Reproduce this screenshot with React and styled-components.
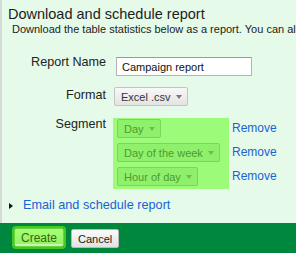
import React from "react";
import styled, { createGlobalStyle } from "styled-components";

const GlobalStyle = createGlobalStyle`
  html, body {
    margin: 0;
    padding: 0;
    width: 296px;
    height: 253px;
    overflow: hidden;
    background: #e5fae9;
  }
  body {
    font-family: "Liberation Sans", Arial, sans-serif;
    color: #222;
  }
`;

const Page = styled.div`
  width: 296px;
  height: 253px;
  display: flex;
  flex-direction: column;
  overflow: hidden;
`;

const Panel = styled.div`
  flex: 1;
  background: #e5fae9;
  border-left: 2px solid #d3dbd6;
  padding: 6px 0 10px 6px;
  display: flex;
  flex-direction: column;
`;

const Title = styled.h2`
  margin: 0;
  font-size: 14.5px;
  font-weight: normal;
  line-height: 17px;
  color: #1d1d1d;
  white-space: nowrap;
`;

const Intro = styled.p`
  margin: 0;
  padding-left: 4px;
  font-size: 11px;
  line-height: 13px;
  white-space: nowrap;
  overflow: hidden;
`;

const Form = styled.div`
  margin: 19px 0 0 -6px;
  display: grid;
  grid-template-columns: 104px auto;
  column-gap: 8px;
  row-gap: 11px;
  align-items: start;
`;

const Label = styled.div`
  text-align: right;
  font-size: 12.6px;
  line-height: 15px;
  margin-top: ${(p) => p.$offset || 0}px;
`;

const TextInput = styled.input`
  box-sizing: border-box;
  width: 136px;
  height: 19px;
  margin: 2px 0 0 2px;
  padding: 0 5px;
  border: 1px solid #b4b4b4;
  border-top-color: #9a9a9a;
  background: #fff;
  font-family: inherit;
  font-size: 11px;
  color: #111;
  outline: none;
`;

const Select = styled.button`
  box-sizing: border-box;
  height: 19px;
  padding: 0 5px 0 6px;
  display: inline-flex;
  align-items: center;
  gap: 5px;
  border-radius: 2px;
  font-family: inherit;
  font-size: 11px;
  border: 1px solid ${(p) => (p.$tint ? "#7ad65a" : "#c4c4c4")};
  background: ${(p) =>
    p.$tint ? "#8ef06b" : "linear-gradient(#f8f8f8, #e3e3e3)"};
  color: ${(p) => (p.$tint ? "#4d9c30" : "#333")};
  cursor: pointer;
  justify-self: start;
`;

const Arrow = styled.span`
  width: 0;
  height: 0;
  border-left: 3.5px solid transparent;
  border-right: 3.5px solid transparent;
  border-top: 4px solid ${(p) => (p.$tint ? "#6cbf4b" : "#777")};
  margin-top: 1px;
`;

const SegmentArea = styled.div`
  display: flex;
  align-items: flex-start;
  margin: 1px 0 0 -1px;
`;

const Highlight = styled.div`
  width: 116px;
  box-sizing: border-box;
  background: #9cfc79;
  padding: 1px 0 3px 4px;
  display: flex;
  flex-direction: column;
  align-items: flex-start;
  gap: 5px;
`;

const Removes = styled.div`
  padding: 1px 0 0 3px;
  display: flex;
  flex-direction: column;
  gap: 5px;
`;

const Link = styled.a`
  color: #1b62d4;
  text-decoration: none;
  font-size: ${(p) => p.$size || 12}px;
  line-height: ${(p) => p.$height || 19}px;
  cursor: pointer;
`;

const Disclosure = styled.div`
  margin: 9px 0 0 1px;
  display: flex;
  align-items: center;
  gap: 10px;
`;

const Triangle = styled.span`
  width: 0;
  height: 0;
  border-top: 3.5px solid transparent;
  border-bottom: 3.5px solid transparent;
  border-left: 4px solid #111;
`;

const Footer = styled.div`
  height: 30px;
  flex: none;
  background: #00873e;
  display: flex;
  align-items: center;
  padding-left: 14px;
  gap: 7px;
`;

const Button = styled.button`
  box-sizing: border-box;
  height: 19px;
  padding: 0 6px;
  border-radius: 2px;
  font-family: inherit;
  font-size: ${(p) => (p.$primary ? 12 : 11)}px;
  border: 1px solid ${(p) => (p.$primary ? "#66d43c" : "#b9b9b9")};
  background: ${(p) =>
    p.$primary
      ? "linear-gradient(#a6ff74, #92f25f)"
      : "linear-gradient(#fbfbfb, #e2e2e2)"};
  color: ${(p) => (p.$primary ? "#37690f" : "#222")};
  box-shadow: ${(p) =>
    p.$primary ? "0 0 0 2px #45c922, inset 0 -2px 0 #c9f5b4" : "none"};
  margin-top: ${(p) => (p.$primary ? -1 : 1)}px;
  cursor: pointer;
`;

const segments = ["Day", "Day of the week", "Hour of day"];

export default function App() {
  return (
    <Page>
      <GlobalStyle />
      <Panel>
        <Title>Download and schedule report</Title>
        <Intro>
          Download the table statistics below as a report. You can also
          schedule it to be emailed.
        </Intro>
        <Form>
          <Label>Report Name</Label>
          <TextInput defaultValue="Campaign report" />

          <Label $offset={1}>Format</Label>
          <Select>
            Excel .csv
            <Arrow />
          </Select>

          <Label>Segment</Label>
          <SegmentArea>
            <Highlight>
              {segments.map((s) => (
                <Select key={s} $tint>
                  {s}
                  <Arrow $tint />
                </Select>
              ))}
            </Highlight>
            <Removes>
              {segments.map((s) => (
                <Link key={s}>Remove</Link>
              ))}
            </Removes>
          </SegmentArea>
        </Form>
        <Disclosure>
          <Triangle />
          <Link $size={12.7} $height={15}>
            Email and schedule report
          </Link>
        </Disclosure>
      </Panel>
      <Footer>
        <Button $primary>Create</Button>
        <Button>Cancel</Button>
      </Footer>
    </Page>
  );
}
